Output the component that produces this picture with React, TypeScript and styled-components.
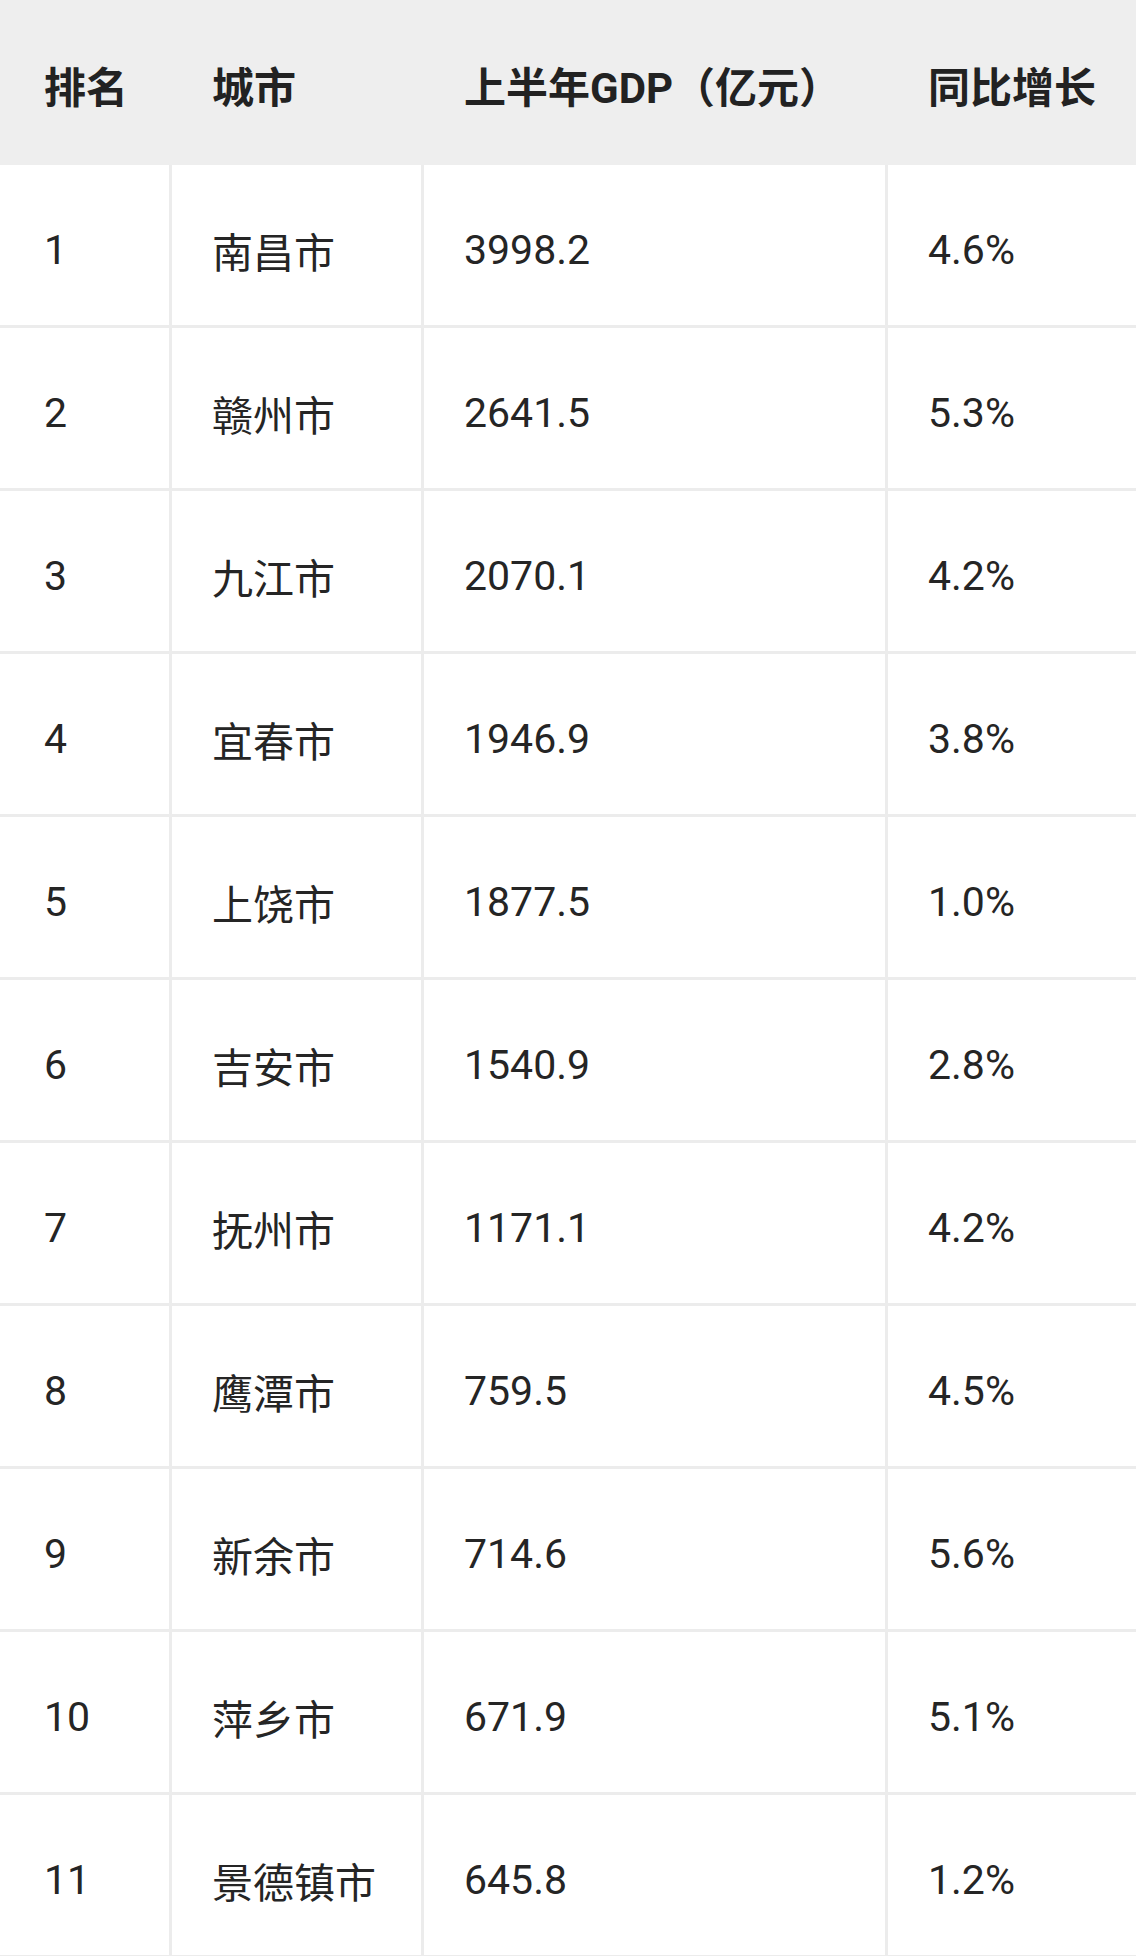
import { createGlobalStyle, styled } from "styled-components";

const rows = [
  { rank: 1, city: "南昌市", gdp: "3998.2", growth: "4.6%" },
  { rank: 2, city: "赣州市", gdp: "2641.5", growth: "5.3%" },
  { rank: 3, city: "九江市", gdp: "2070.1", growth: "4.2%" },
  { rank: 4, city: "宜春市", gdp: "1946.9", growth: "3.8%" },
  { rank: 5, city: "上饶市", gdp: "1877.5", growth: "1.0%" },
  { rank: 6, city: "吉安市", gdp: "1540.9", growth: "2.8%" },
  { rank: 7, city: "抚州市", gdp: "1171.1", growth: "4.2%" },
  { rank: 8, city: "鹰潭市", gdp: "759.5", growth: "4.5%" },
  { rank: 9, city: "新余市", gdp: "714.6", growth: "5.6%" },
  { rank: 10, city: "萍乡市", gdp: "671.9", growth: "5.1%" },
  { rank: 11, city: "景德镇市", gdp: "645.8", growth: "1.2%" },
];

const headers = ["排名", "城市", "上半年GDP（亿元）", "同比增长"];

const App = () => {
  return (
    <>
      <GlobalStyle />
      <Table>
        <HeadRow>
          {headers.map((h) => (
            <HeadCell key={h}>{h}</HeadCell>
          ))}
        </HeadRow>
        {rows.map((r) => (
          <Row key={r.rank}>
            <Cell>{r.rank}</Cell>
            <Cell $divided>{r.city}</Cell>
            <Cell $divided>{r.gdp}</Cell>
            <Cell $divided>{r.growth}</Cell>
          </Row>
        ))}
      </Table>
    </>
  );
};

const GlobalStyle = createGlobalStyle`
  html, body {
    margin: 0;
    padding: 0;
    background: #ffffff;
  }

  body {
    width: 1136px;
    height: 1956px;
    overflow: hidden;
    font-family: Roboto, "Noto Sans CJK SC", sans-serif;
    color: #222222;
  }
`;

const Table = styled.div`
  width: 1136px;
  display: flex;
  flex-direction: column;
`;

const columns = "169px 252px 464px 1fr";

const HeadRow = styled.div`
  height: 165px;
  display: grid;
  grid-template-columns: ${columns};
  background-color: #eeeeee;
`;

const HeadCell = styled.div`
  display: flex;
  align-items: center;
  padding: 4px 0 0 43px;
  font-size: 42px;
  font-weight: 700;
  color: #222222;
  white-space: nowrap;

  &:first-child {
    padding-left: 44px;
  }
`;

const Row = styled.div`
  height: 163px;
  box-sizing: border-box;
  display: grid;
  grid-template-columns: ${columns};
  border-bottom: 3px solid #ececec;
`;

const Cell = styled.div<{ $divided?: boolean }>`
  display: flex;
  align-items: center;
  padding: 9px 0 0 ${({ $divided }) => ($divided ? "40px" : "44px")};
  font-size: 41px;
  color: #252525;
  white-space: nowrap;
  border-left: ${({ $divided }) => ($divided ? "3px solid #ececec" : "none")};
`;

export default App;
